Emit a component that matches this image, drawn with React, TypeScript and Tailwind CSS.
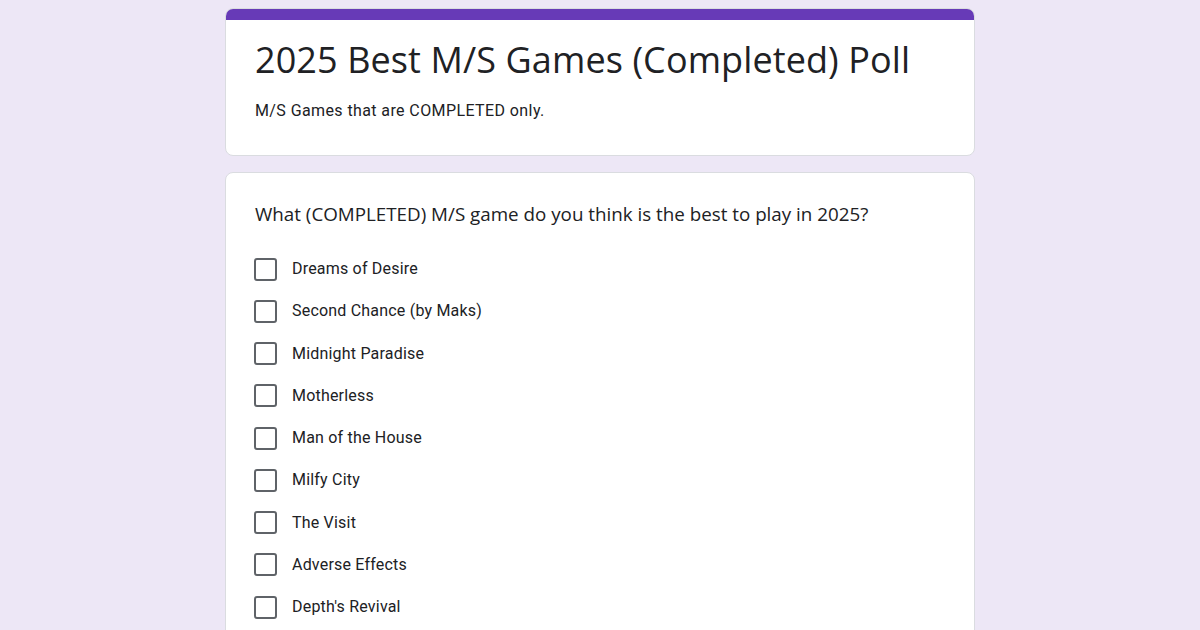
const options = [
  "Dreams of Desire",
  "Second Chance (by Maks)",
  "Midnight Paradise",
  "Motherless",
  "Man of the House",
  "Milfy City",
  "The Visit",
  "Adverse Effects",
  "Depth's Revival",
];

export default function App() {
  return (
    <div className="min-h-screen w-full bg-[#ede7f6] pt-2 pb-10" style={{ fontFamily: "Roboto, 'Liberation Sans', sans-serif" }}>
      <div className="mx-auto flex w-[750px] flex-col gap-4">
        {/* Title card */}
        <div className="overflow-hidden rounded-lg border border-[#dadce0] bg-white">
          <div className="h-[11px] bg-[#673ab7]" />
          <div className="pl-[29px] pr-[28px] pb-[34px] pt-[18px]">
            <h1 className="text-[36px] leading-[44px] tracking-[0.1px] text-[#202124]" style={{ fontFamily: "'Open Sans', sans-serif" }}>
              2025 Best M/S Games (Completed) Poll
            </h1>
            <p className="mt-[19px] text-[16px] leading-5 tracking-[0.4px] text-[#202124]">M/S Games that are COMPLETED only.</p>
          </div>
        </div>

        {/* Question card */}
        <div className="rounded-lg border border-[#dadce0] bg-white pl-[28px] pr-[28px] pt-[27px] pb-6">
          <div className="pl-px text-[18.8px] leading-7 text-[#202124]" style={{ fontFamily: "'Open Sans', sans-serif" }}>
            What (COMPLETED) M/S game do you think is the best to play in 2025?
          </div>
          <div className="mt-[29px] flex flex-col gap-[18.25px]">
            {options.map((o) => (
              <label key={o} className="flex h-6 items-center gap-[15px]">
                <span className="h-[23px] w-[23px] shrink-0 rounded-[3px] border-2 border-[#5f6368]" />
                <span className="text-[16px] tracking-[0.2px] text-[#202124]">{o}</span>
              </label>
            ))}
          </div>
        </div>
      </div>
    </div>
  );
}
